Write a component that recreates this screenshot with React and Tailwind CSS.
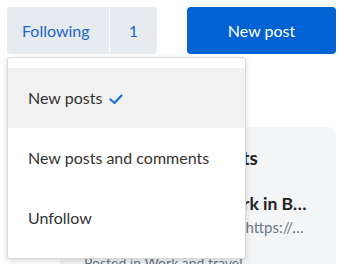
import React from "react";

const Check = () => (
  <svg width="14" height="11" viewBox="0 0 14 11" fill="none" className="ml-[7px] mt-[2px]">
    <path d="M1.5 5.5 L5.5 9 L12.5 1.5" stroke="#1a6fd8" strokeWidth="2.2" strokeLinecap="round" strokeLinejoin="round" />
  </svg>
);

const MenuItem = ({ label, active, selected }) => (
  <div
    className={
      "flex items-center h-[60px] pl-[20px] text-[16px] text-[#333333] " +
      (active ? "bg-[#f2f2f2]" : "bg-white")
    }
  >
    <span>{label}</span>
    {selected && <Check />}
  </div>
);

export default function App() {
  return (
    <div className="relative w-[349px] h-[264px] overflow-hidden bg-white font-['Lato',sans-serif]">
      {/* top bar */}
      <div className="flex justify-between pl-[7px] pr-[13px] pt-[7px]">
        <div className="flex h-[47px] rounded-[4px] bg-[#e6ebf0] text-[#1a66cc] text-[16px]">
          <button className="w-[102px] pl-[15px] text-left">Following</button>
          <div className="w-px bg-white my-[2px]" />
          <button className="w-[47px] text-center">1</button>
        </div>
        <button className="w-[149px] h-[47px] rounded-[4px] bg-[#0062d3] text-white text-[16px]">
          New post
        </button>
      </div>

      {/* card behind */}
      <div className="ml-[60px] mr-[13px] mt-[73px] h-[200px] rounded-[8px] bg-[#f4f5f7] pl-[24px] pr-[26px] pt-[19px]">
        <div className="text-[18.75px] font-bold text-[#222] leading-[24px]">Recommended posts</div>
        <div className="mt-[22px] text-[17.5px] font-bold text-[#222] leading-[24px] truncate">
          Finding a remote work in Berlin
        </div>
        <div className="text-[15px] text-[#6b7785] leading-[22px] truncate">
          Posted by maria_kowal · https://community.example.com/posts
        </div>
        <div className="mt-[15px] text-[14px] text-[#6b7785] leading-[20px]">Posted in Work and travel</div>
      </div>

      {/* dropdown */}
      <div className="absolute left-[7px] top-[57px] w-[239px] py-[10px] bg-white border border-[#d9d9d9] rounded-[3px] shadow-[0_2px_6px_rgba(0,0,0,0.15)]">
        <MenuItem label="New posts" active selected />
        <MenuItem label="New posts and comments" />
        <MenuItem label="Unfollow" />
      </div>
    </div>
  );
}
